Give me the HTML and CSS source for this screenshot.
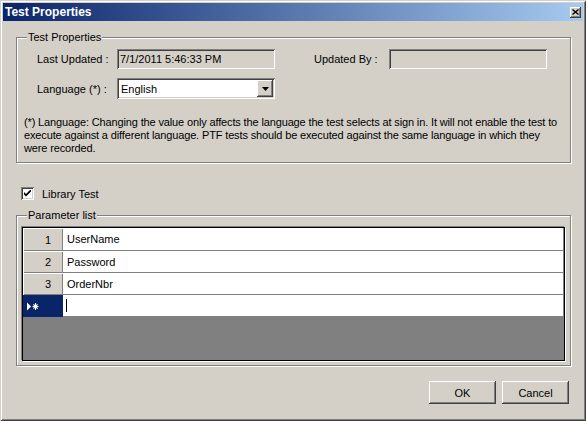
FILE: index.html
```html
<!DOCTYPE html>
<html>
<head>
<meta charset="utf-8">
<link rel="stylesheet" href="styles.css">
</head>
<body>
<div class="window">
  <div class="titlebar">
    <span class="title">Test Properties</span>
    <span class="close"><svg width="7" height="6" viewBox="0 0 7 6"><path d="M0.5 0.5 L6.5 5.5 M6.5 0.5 L0.5 5.5" stroke="#000" stroke-width="1.4" fill="none"/></svg></span>
  </div>
  <div class="content">
    <div class="group g1">
      <span class="legend">Test Properties</span>
      <div class="row r1">
        <span class="lbl l1">Last Updated :</span>
        <div class="tb ro">7/1/2011 5:46:33 PM</div>
        <span class="lbl l2">Updated By :</span>
        <div class="tb ro"></div>
      </div>
      <div class="row r2">
        <span class="lbl l1">Language (*) :</span>
        <div class="combo">
          <span class="combo-text">English</span>
          <span class="dd"><svg width="7" height="4" viewBox="0 0 7 4"><path d="M0 0 H7 L3.5 4 Z" fill="#000"/></svg></span>
        </div>
      </div>
      <p class="note">(*) Language: Changing the value only affects the language the test selects at sign in. It will not enable the test to<br>execute against a different language. PTF tests should be executed against the same language in which they<br>were recorded.</p>
    </div>
    <div class="check-row">
      <span class="cb"><svg width="7" height="7" viewBox="0 0 7 7"><path d="M0 2 L2 4 L7 -1 V1.5 L2 6.5 L0 4.5 Z" fill="#000"/></svg></span>
      <span class="cb-label">Library Test</span>
    </div>
    <div class="group g2">
      <span class="legend">Parameter list</span>
      <div class="grid">
        <div class="grow"><div class="rh">1</div><div class="cell">UserName</div></div>
        <div class="grow"><div class="rh">2</div><div class="cell">Password</div></div>
        <div class="grow"><div class="rh">3</div><div class="cell">OrderNbr</div></div>
        <div class="grow"><div class="rh sel"><svg width="14" height="9" viewBox="0 0 14 9"><path d="M1 0.5 L5 4.5 L1 8.5 Z" fill="#fff"/><path d="M9.5 1 V8 M6.5 4.5 H12.5 M7.4 2.3 L11.6 6.7 M11.6 2.3 L7.4 6.7" stroke="#fff" stroke-width="1.1" fill="none"/></svg></div><div class="cell"><span class="caret"></span></div></div>
        <div class="grid-empty"></div>
      </div>
    </div>
    <div class="buttons">
      <button class="btn">OK</button>
      <button class="btn">Cancel</button>
    </div>
  </div>
</div>
</body>
</html>
```
FILE: styles.css
```css
html, body {
  margin: 0;
  padding: 0;
}
body {
  background: #D4D0C8;
  font-family: "Liberation Sans", Arial, sans-serif;
  font-size: 11px;
  color: #000;
}
.window {
  width: 586px;
  height: 421px;
  box-sizing: border-box;
  padding: 3px;
  background: #D4D0C8;
  box-shadow: inset 1px 1px 0 #D4D0C8, inset -1px -1px 0 #404040, inset 2px 2px 0 #fff, inset -2px -2px 0 #808080;
  display: flex;
  flex-direction: column;
}
.titlebar {
  height: 18px;
  flex: none;
  background: linear-gradient(to right, #0A246A, #A6CAF0);
  display: flex;
  align-items: center;
  justify-content: space-between;
  padding: 0 2px 0 2px;
  color: #fff;
}
.title {
  font-weight: bold;
  font-size: 12px;
}
.close {
  width: 11px;
  height: 11px;
  box-sizing: border-box;
  background: #D4D0C8;
  box-shadow: inset -1px -1px 0 #404040, inset 1px 1px 0 #fff, inset -2px -2px 0 #808080;
  display: flex;
  align-items: center;
  justify-content: center;
}
.content {
  flex: 1;
  display: flex;
  flex-direction: column;
  padding: 16px 12px 0 13px;
}
.group {
  position: relative;
  box-sizing: border-box;
  border: 1px solid #808080;
  box-shadow: inset 1px 1px 0 #fff, 1px 1px 0 #fff;
}
.legend {
  position: absolute;
  top: -7px;
  left: 10px;
  padding: 0 1px;
  line-height: 13px;
  background: #D4D0C8;
}
.g1 {
  height: 126px;
  padding-top: 11px;
}
.row {
  display: flex;
  align-items: center;
  padding-left: 20px;
}
.r1 {
  height: 20px;
}
.r2 {
  height: 21px;
  margin-top: 9px;
}
.lbl.l1 {
  width: 80px;
}
.lbl.l2 {
  width: 75px;
  margin-left: 39px;
}
.tb {
  width: 158px;
  height: 20px;
  box-sizing: border-box;
  padding-left: 3px;
  display: flex;
  align-items: center;
  background: #fff;
  box-shadow: inset 1px 1px 0 #808080, inset -1px -1px 0 #fff, inset 2px 2px 0 #404040, inset -2px -2px 0 #D4D0C8;
}
.tb.ro {
  background: #D4D0C8;
}
.combo {
  width: 158px;
  height: 21px;
  box-sizing: border-box;
  padding: 2px;
  display: flex;
  align-items: center;
  background: #fff;
  box-shadow: inset 1px 1px 0 #808080, inset -1px -1px 0 #fff, inset 2px 2px 0 #404040, inset -2px -2px 0 #D4D0C8;
}
.combo-text {
  flex: 1;
  padding-left: 2px;
}
.dd {
  width: 16px;
  height: 17px;
  box-sizing: border-box;
  background: #D4D0C8;
  box-shadow: inset -1px -1px 0 #404040, inset 1px 1px 0 #fff, inset -2px -2px 0 #808080;
  display: flex;
  align-items: center;
  justify-content: center;
}
.note {
  margin: 17px 0 0 0;
  padding-left: 7px;
  line-height: 13px;
  letter-spacing: -0.14px;
  white-space: nowrap;
}
.check-row {
  display: flex;
  align-items: center;
  height: 13px;
  margin-top: 24px;
  padding-left: 5px;
}
.cb {
  width: 13px;
  height: 13px;
  box-sizing: border-box;
  background: #fff;
  box-shadow: inset 1px 1px 0 #808080, inset -1px -1px 0 #fff, inset 2px 2px 0 #404040, inset -2px -2px 0 #D4D0C8;
  display: flex;
  align-items: center;
  justify-content: center;
}
.cb-label {
  margin-left: 8px;
}
.g2 {
  height: 151px;
  margin-top: 15px;
  padding: 11px 0 0 5px;
}
.grid {
  width: 543px;
  height: 134px;
  box-sizing: border-box;
  border: 1px solid #000;
  padding-top: 1px;
  box-shadow: -1px -1px 0 #808080, 1px 1px 0 #fff;
  background: #808080;
  display: flex;
  flex-direction: column;
}
.grow {
  display: flex;
  height: 22px;
  flex: none;
}
.grow:first-child {
  margin-top: -1px;
  height: 23px;
}
.rh {
  width: 40px;
  box-sizing: border-box;
  background: #D4D0C8;
  box-shadow: inset 1px 1px 0 #fff, inset -1px -1px 0 #808080;
  display: flex;
  align-items: center;
  justify-content: flex-end;
  padding-right: 12px;
}
.rh.sel {
  background: #0A246A;
  box-shadow: none;
  justify-content: flex-start;
  padding: 0 0 0 3px;
}
.cell {
  flex: 1;
  background: #fff;
  border-bottom: 1px solid #808080;
  border-right: 1px solid #808080;
  display: flex;
  align-items: center;
  padding-left: 4px;
}
.caret {
  width: 1px;
  height: 13px;
  background: #000;
  margin-left: -1px;
}
.grid-empty {
  flex: 1;
}
.buttons {
  display: flex;
  justify-content: flex-end;
  gap: 6px;
  margin-top: 15px;
  padding-right: 2px;
}
.btn {
  width: 67px;
  height: 23px;
  border: none;
  margin: 0;
  padding: 0;
  background: #D4D0C8;
  font-family: "Liberation Sans", Arial, sans-serif;
  font-size: 11px;
  color: #000;
  box-shadow: inset -1px -1px 0 #404040, inset 1px 1px 0 #fff, inset -2px -2px 0 #808080;
}
```
